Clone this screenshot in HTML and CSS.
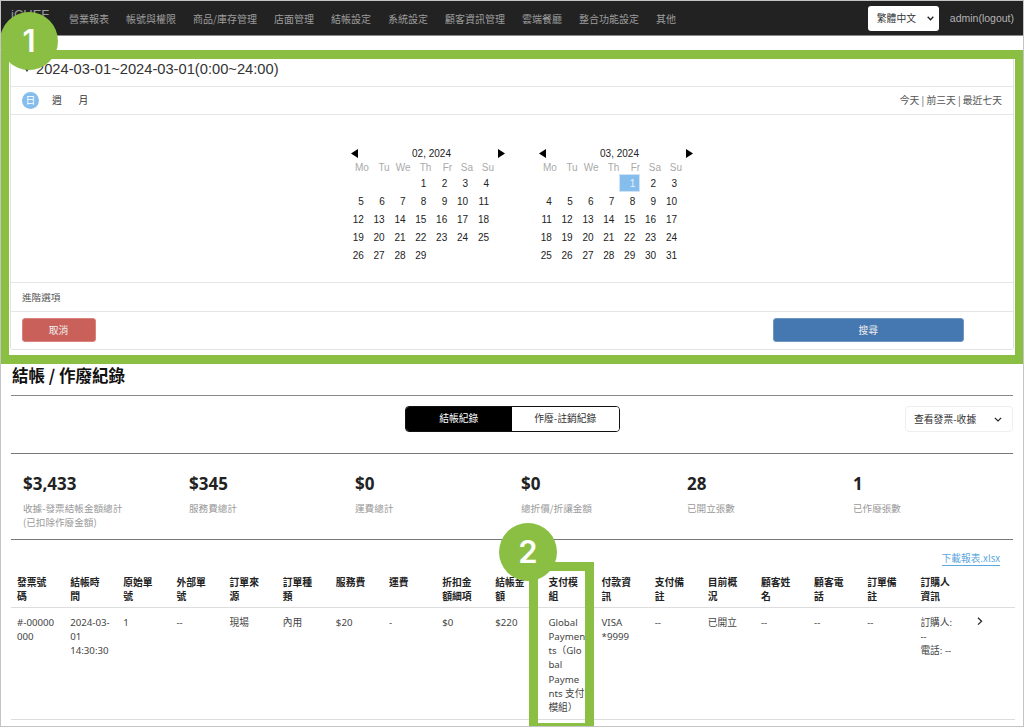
FILE: index.html
```html
<!DOCTYPE html>
<html lang="zh-Hant">

<head>
    <meta charset="UTF-8">
    <title>結帳 / 作廢紀錄</title>
    <link rel="stylesheet" href="styles.css">
</head>

<body>
    <div class="frame">
        <nav class="navbar">
            <span class="brand">iCHEF</span>
            <a>營業報表</a>
            <a>帳號與權限</a>
            <a>商品/庫存管理</a>
            <a>店面管理</a>
            <a>結帳設定</a>
            <a>系統設定</a>
            <a>顧客資訊管理</a>
            <a>雲端餐廳</a>
            <a>整合功能設定</a>
            <a>其他</a>
            <div class="lang-select">
                <span>繁體中文</span>
                <svg width="7" height="5" viewBox="0 0 7 5"><polyline points="0.7,0.8 3.5,3.8 6.3,0.8" fill="none" stroke="#222" stroke-width="1.3"/></svg>
            </div>
            <span class="admin">admin(logout)</span>
        </nav>

        <section class="panel">
            <div class="panel-title"><i class="caret"></i>2024-03-01~2024-03-01(0:00~24:00)</div>
            <div class="range-row">
                <span class="tab tab-active">日</span>
                <span class="tab">週</span>
                <span class="tab">月</span>
                <span class="quick-links">今天 | 前三天 | 最近七天</span>
            </div>
            <div class="calendars">
                <div class="month">
                    <div class="month-head">
                        <svg width="7" height="9" viewBox="0 0 7 9"><polygon points="7,0 7,9 0,4.5" fill="#000"/></svg>
                        <span>02, 2024</span>
                        <svg width="7" height="9" viewBox="0 0 7 9"><polygon points="0,0 0,9 7,4.5" fill="#000"/></svg>
                    </div>
                    <table class="cal">
                        <thead>
                            <tr><th>Mo</th><th>Tu</th><th>We</th><th>Th</th><th>Fr</th><th>Sa</th><th>Su</th></tr>
                        </thead>
                        <tbody>
                            <tr><td></td><td></td><td></td><td>1</td><td>2</td><td>3</td><td>4</td></tr>
                            <tr><td>5</td><td>6</td><td>7</td><td>8</td><td>9</td><td>10</td><td>11</td></tr>
                            <tr><td>12</td><td>13</td><td>14</td><td>15</td><td>16</td><td>17</td><td>18</td></tr>
                            <tr><td>19</td><td>20</td><td>21</td><td>22</td><td>23</td><td>24</td><td>25</td></tr>
                            <tr><td>26</td><td>27</td><td>28</td><td>29</td><td></td><td></td><td></td></tr>
                        </tbody>
                    </table>
                </div>
                <div class="month">
                    <div class="month-head">
                        <svg width="7" height="9" viewBox="0 0 7 9"><polygon points="7,0 7,9 0,4.5" fill="#000"/></svg>
                        <span>03, 2024</span>
                        <svg width="7" height="9" viewBox="0 0 7 9"><polygon points="0,0 0,9 7,4.5" fill="#000"/></svg>
                    </div>
                    <table class="cal">
                        <thead>
                            <tr><th>Mo</th><th>Tu</th><th>We</th><th>Th</th><th>Fr</th><th>Sa</th><th>Su</th></tr>
                        </thead>
                        <tbody>
                            <tr><td></td><td></td><td></td><td></td><td class="selected">1</td><td>2</td><td>3</td></tr>
                            <tr><td>4</td><td>5</td><td>6</td><td>7</td><td>8</td><td>9</td><td>10</td></tr>
                            <tr><td>11</td><td>12</td><td>13</td><td>14</td><td>15</td><td>16</td><td>17</td></tr>
                            <tr><td>18</td><td>19</td><td>20</td><td>21</td><td>22</td><td>23</td><td>24</td></tr>
                            <tr><td>25</td><td>26</td><td>27</td><td>28</td><td>29</td><td>30</td><td>31</td></tr>
                        </tbody>
                    </table>
                </div>
            </div>
            <div class="advanced">進階選項</div>
            <div class="actions">
                <button type="button" class="btn btn-cancel">取消</button>
                <button type="button" class="btn btn-search">搜尋</button>
            </div>
        </section>

        <h1 class="page-title">結帳 / 作廢紀錄</h1>

        <div class="toolbar">
            <div class="toggle">
                <span class="toggle-on">結帳紀錄</span>
                <span class="toggle-off">作廢-註銷紀錄</span>
            </div>
            <div class="view-select">
                <span>查看發票-收據</span>
                <svg width="8" height="5" viewBox="0 0 8 5"><polyline points="0.8,0.8 4,4 7.2,0.8" fill="none" stroke="#222" stroke-width="1.2"/></svg>
            </div>
        </div>

        <div class="stats">
            <div class="stat"><b>$3,433</b><p>收據-發票結帳金額總計<br>(已扣除作廢金額)</p></div>
            <div class="stat"><b>$345</b><p>服務費總計</p></div>
            <div class="stat"><b>$0</b><p>運費總計</p></div>
            <div class="stat"><b>$0</b><p>總折價/折讓金額</p></div>
            <div class="stat"><b>28</b><p>已開立張數</p></div>
            <div class="stat"><b>1</b><p>已作廢張數</p></div>
        </div>

        <div class="download"><a>下載報表.xlsx</a></div>

        <table class="report">
            <thead>
                <tr>
                    <th>發票號碼</th>
                    <th>結帳時間</th>
                    <th>原始單號</th>
                    <th>外部單號</th>
                    <th>訂單來源</th>
                    <th>訂單種類</th>
                    <th>服務費</th>
                    <th>運費</th>
                    <th>折扣金額細項</th>
                    <th>結帳金額</th>
                    <th>支付模組</th>
                    <th>付款資訊</th>
                    <th>支付備註</th>
                    <th>目前概況</th>
                    <th>顧客姓名</th>
                    <th>顧客電話</th>
                    <th>訂單備註</th>
                    <th>訂購人<br>資訊</th>
                    <th class="col-more"></th>
                </tr>
            </thead>
            <tbody>
                <tr>
                    <td>#-00000<br>000</td>
                    <td>2024-03-<br>01<br>14:30:30</td>
                    <td>1</td>
                    <td>--</td>
                    <td>現場</td>
                    <td>內用</td>
                    <td>$20</td>
                    <td>-</td>
                    <td>$0</td>
                    <td>$220</td>
                    <td>Global<br>Paymen<br>ts（Glo<br>bal<br>Payme<br>nts 支付<br>模組）</td>
                    <td>VISA<br>*9999</td>
                    <td>--</td>
                    <td>已開立</td>
                    <td>--</td>
                    <td>--</td>
                    <td>--</td>
                    <td>訂購人:<br>--<br>電話: --</td>
                    <td class="col-more">
                        <svg width="6" height="9" viewBox="0 0 6 9"><polyline points="1,0.8 4.6,4.2 1,7.6" fill="none" stroke="#222" stroke-width="1.2"/></svg>
                    </td>
                </tr>
            </tbody>
        </table>

        <!-- green callouts drawn over the page -->
        <div class="callout-box callout-box-1"></div>
        <div class="callout-num callout-num-1">1</div>
        <div class="callout-box callout-box-2"></div>
        <div class="callout-num callout-num-2">2</div>
    </div>
</body>

</html>
```

FILE: styles.css
```css
* {
    box-sizing: border-box;
}

body {
    margin: 0;
    padding: 0;
    background-color: #fff;
    font-family: "Noto Sans", "Noto Sans CJK TC", sans-serif;
    font-size: 10px;
    color: #333;
}

.frame {
    position: relative;
    width: 1024px;
    height: 727px;
    overflow: hidden;
    border: 1px solid #c4c4c4;
}

/* top bar */
.navbar {
    display: flex;
    align-items: center;
    height: 35px;
    padding-left: 10px;
    background-color: #222;
    border-bottom: 1px solid #8a8a8a;
}

.brand {
    width: 58px;
    margin-top: -8px;
    font-family: "Liberation Sans", sans-serif;
    font-size: 13px;
    color: #9d9d9d;
}

.navbar a {
    margin-right: 17px;
    font-family: "Noto Sans CJK TC", sans-serif;
    font-size: 10px;
    color: #9d9d9d;
}

.lang-select {
    display: flex;
    align-items: center;
    justify-content: space-between;
    width: 71px;
    height: 25px;
    margin-left: auto;
    padding: 0 5px 0 9px;
    background-color: #fff;
    border-radius: 3px;
    font-family: "Noto Sans CJK TC", sans-serif;
    font-size: 9.8px;
    color: #333;
}

.admin {
    margin: 0 9px 0 11px;
    font-family: "Liberation Sans", sans-serif;
    font-size: 10.5px;
    color: #b4b4b4;
}

/* date filter panel */
.panel {
    height: 300px;
    margin: 14px 9px 0 9px;
    border: 1px solid #e2e2e2;
    border-radius: 3px;
    font-family: "Liberation Sans", "Noto Sans CJK TC", sans-serif;
}

.panel-title {
    display: flex;
    align-items: center;
    height: 36px;
    padding: 0 0 0 14px;
    border-bottom: 1px solid #e6e6e6;
    font-size: 14.7px;
    color: #333;
}

.caret {
    width: 0;
    height: 0;
    margin: 3px 7px 0 0;
    border-top: 3px solid #333;
    border-left: 2px solid transparent;
    border-right: 2px solid transparent;
}

.range-row {
    display: flex;
    align-items: center;
    height: 28px;
    padding: 0 11px;
    border-bottom: 1px solid #e6e6e6;
}

.tab {
    width: 17px;
    height: 17px;
    margin-right: 9.5px;
    line-height: 17px;
    text-align: center;
    border-radius: 50%;
    font-family: "Noto Sans CJK TC", sans-serif;
    font-size: 9.8px;
    color: #333;
}

.tab-active {
    background-color: #85bdec;
    color: #fff;
}

.quick-links {
    margin: -1px 0 0 auto;
    font-family: "Noto Sans CJK TC", sans-serif;
    font-size: 9.8px;
    color: #555;
}

.calendars {
    display: flex;
    height: 168px;
    padding: 31px 0 0 337px;
    border-bottom: 1px solid #e6e6e6;
}

.month {
    width: 188px;
}

.month-head {
    display: flex;
    align-items: center;
    justify-content: space-between;
    width: 154px;
    height: 14px;
    margin-left: 3px;
    font-size: 10px;
    color: #222;
}

.month-head span {
    margin-left: 7px;
}

.cal {
    width: 146px;
    table-layout: fixed;
    border-collapse: collapse;
}

.cal th {
    height: 14px;
    padding: 0;
    font-weight: normal;
    font-size: 10px;
    text-align: right;
    color: #aaa;
}

.cal td {
    height: 18.1px;
    padding: 0 5px 0 0;
    font-size: 10px;
    text-align: right;
    color: #222;
}

.cal td.selected {
    background-color: #85bdec;
    box-shadow: inset 0 0 0 1px #cfe4f7;
    color: #e6f2fc;
}

.advanced {
    display: flex;
    align-items: center;
    height: 29px;
    padding-left: 11px;
    border-bottom: 1px solid #e6e6e6;
    font-family: "Noto Sans CJK TC", sans-serif;
    font-size: 9.6px;
    color: #555;
}

.actions {
    display: flex;
    justify-content: space-between;
    padding: 6px 49px 0 10.5px;
}

.btn {
    height: 24px;
    padding: 0;
    border: 1px solid transparent;
    border-radius: 3px;
    color: #eee;
    font-family: "Noto Sans CJK TC", sans-serif;
    font-size: 9.8px;
}

.btn-cancel {
    width: 74px;
    background-color: #c9605a;
    border-color: #d9817c;
}

.btn-search {
    width: 191.5px;
    background-color: #4577b0;
    border-color: #6f97c4;
}

/* report */
.page-title {
    height: 46px;
    margin: 0 10px;
    padding: 13px 0 0 1px;
    border-bottom: 1px solid #888;
    font-family: "Noto Sans CJK TC", sans-serif;
    font-size: 16.5px;
    line-height: 24px;
    font-weight: bold;
    color: #111;
}

.toolbar {
    position: relative;
    display: flex;
    justify-content: center;
    height: 58px;
    margin: 0 10px;
    padding-top: 10px;
    border-bottom: 1px solid #777;
    font-family: "Noto Sans CJK TC", sans-serif;
    font-size: 9.8px;
}

.toggle {
    display: flex;
    width: 215px;
    height: 26px;
    border: 1.5px solid #111;
    border-radius: 4px;
    overflow: hidden;
}

.toggle span {
    flex: 1;
    line-height: 23px;
    text-align: center;
}

.toggle-on {
    background-color: #000;
    color: #fff;
}

.toggle-off {
    background-color: #fff;
    color: #333;
}

.view-select {
    position: absolute;
    top: 10px;
    right: 0;
    display: flex;
    align-items: center;
    justify-content: space-between;
    width: 108px;
    height: 26px;
    padding: 0 10px 0 8px;
    border: 1px solid #eee;
    border-radius: 4px;
    color: #333;
}

.stats {
    display: grid;
    grid-template-columns: repeat(6, 166px);
    height: 86px;
    margin: 0 10px;
    padding: 18px 0 0 12px;
    border-bottom: 1px solid #777;
}

.stat b {
    display: block;
    font-size: 17px;
    line-height: 24px;
    color: #222;
}

.stat p {
    margin: 5px 0 0;
    font-family: "Noto Sans CJK TC", sans-serif;
    font-size: 9.6px;
    line-height: 14.2px;
    color: #999;
}

.download {
    height: 34px;
    margin: 0 23px 0 0;
    padding-top: 11px;
    text-align: right;
    font-family: "Noto Sans CJK TC", "Noto Sans", sans-serif;
    font-size: 9.7px;
    line-height: 14px;
}

.download a {
    color: #5ba8e0;
    border-bottom: 1px solid #5ba8e0;
}

.report {
    width: 1004px;
    margin-left: 10px;
    table-layout: fixed;
    border-collapse: collapse;
    font-size: 9.7px;
    line-height: 14.25px;
}

.report th,
.report td {
    width: 53.15px;
    padding: 0 8.5px 0 6px;
    text-align: left;
    vertical-align: top;
}

.report th {
    height: 33px;
    padding-top: 2px;
    font-weight: bold;
    font-size: 9.8px;
    color: #222;
    border-bottom: 1px solid #ddd;
}

.report td {
    height: 112px;
    padding-top: 8px;
    color: #444;
    white-space: nowrap;
    border-bottom: 1px solid #ddd;
}

.report .col-more {
    width: auto;
    padding-left: 9px;
}

/* callouts */
.callout-box {
    position: absolute;
    border: 9px solid #8abf43;
}

.callout-box-1 {
    top: 49px;
    left: -1px;
    width: 1024px;
    height: 314px;
}

.callout-box-2 {
    top: 561px;
    left: 528px;
    width: 65px;
    height: 170px;
}

.callout-num {
    position: absolute;
    width: 58px;
    height: 58px;
    border-radius: 50%;
    background-color: #8abf43;
    font-family: "Inter", sans-serif;
    font-size: 31px;
    font-weight: 600;
    line-height: 58px;
    text-align: center;
    color: #fff;
}

.callout-num-1 {
    top: 11px;
    left: -1px;
}

.callout-num-2 {
    top: 522px;
    left: 498px;
}
```
